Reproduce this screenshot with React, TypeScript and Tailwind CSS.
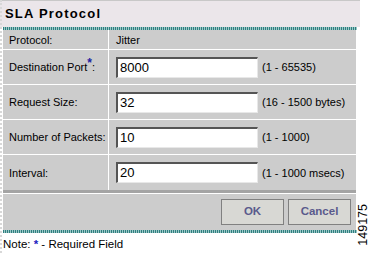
const rows = [
  { label: "Destination Port", required: true, value: "8000", range: "(1 - 65535)" },
  { label: "Request Size", required: false, value: "32", range: "(16 - 1500 bytes)" },
  { label: "Number of Packets", required: false, value: "10", range: "(1 - 1000)" },
  { label: "Interval", required: false, value: "20", range: "(1 - 1000 msecs)" },
];

function TealRule() {
  return (
    <div className="h-[3px] w-full bg-[repeating-linear-gradient(90deg,#2f7f7f_0px,#2f7f7f_1px,#9cc8c8_1px,#9cc8c8_2px)]" />
  );
}

export default function App() {
  return (
    <div className="relative h-[253px] w-[371px] overflow-hidden bg-white font-['Liberation_Sans',Arial,sans-serif] text-black">
      {/* dotted page edge */}
      <div className="absolute left-0 top-0 h-full w-[2px] border-l-2 border-dotted border-[#d8d8d8]" />

      {/* Title bar */}
      <div className="flex h-[27px] w-[360px] items-center border-t border-[#c8c8c8] bg-[#ebe6ea] pl-[5px]">
        <span className="text-[13px] font-bold tracking-[1.2px] text-black">SLA Protocol</span>
      </div>

      <div className="ml-[3px] w-[354px]">
        <TealRule />

        <div className="border-r border-white bg-[#cccccc] text-[11px]">
          {/* Protocol row */}
          <div className="flex h-[20px] border-b border-white">
            <div className="flex w-[106px] items-center border-r border-white pl-[6px] pt-px">Protocol:</div>
            <div className="flex items-center pl-[7px] pt-px">Jitter</div>
          </div>

          {rows.map((row, i) => (
            <div
              key={row.label}
              className={`flex h-[35px] ${i < rows.length - 1 ? "border-b border-white" : ""}`}
            >
              <div className="flex w-[106px] items-center whitespace-nowrap border-r border-white pl-[6px] pt-px">
                {row.label}
                {row.required && (
                  <span className="relative -top-[5px] text-[12px] font-bold text-[#2020a0]">*</span>
                )}
                :
              </div>
              <div className="flex items-center pl-[7px]">
                <div className="flex h-[21px] w-[142px] items-center border-l-2 border-t-2 border-r border-b border-l-[#555] border-t-[#555] border-r-[#e8e8e8] border-b-[#e8e8e8] bg-white pl-[2px] text-[13px]">
                  {row.value}
                </div>
                <span className="ml-[4px] whitespace-nowrap pt-px">{row.range}</span>
              </div>
            </div>
          ))}

          {/* separator */}
          <div className="h-[3px] bg-[#a4a4a4]" />
          <div className="h-px bg-white" />

          {/* buttons */}
          <div className="flex h-[36px] items-center justify-end gap-[4px] pr-[5px]">
            <button className="h-[26px] w-[63px] border border-[#808080] bg-[#d8d8d4] text-[11.5px] font-bold text-[#5a5a8c]">
              OK
            </button>
            <button className="h-[26px] w-[63px] border border-[#808080] bg-[#d8d8d4] text-[11.5px] font-bold text-[#5a5a8c]">
              Cancel
            </button>
          </div>
        </div>

        <TealRule />
      </div>

      <div className="pl-[3px] pt-[3px] text-[11.5px]">
        Note: <span className="font-bold text-[#2020c0]">*</span> - Required Field
      </div>

      {/* figure number */}
      <div className="absolute left-[357px] top-[204px] rotate-180 text-[12.5px] leading-none [writing-mode:vertical-rl]">
        149175
      </div>
    </div>
  );
}
